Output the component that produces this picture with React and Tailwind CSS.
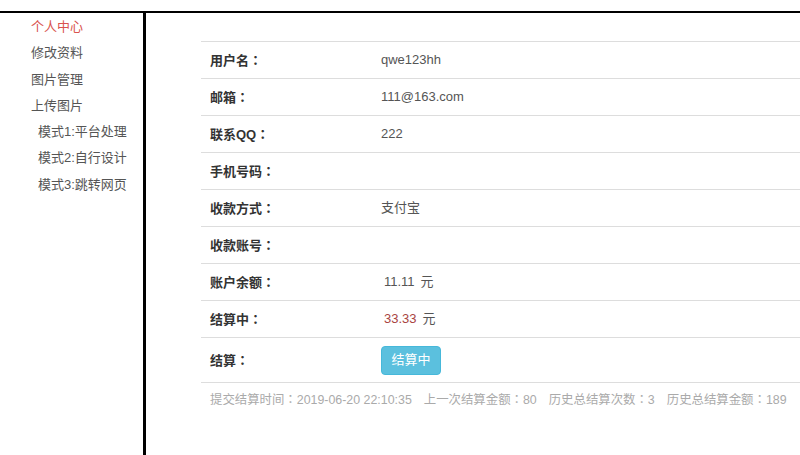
import React from "react";

const font = { fontFamily: '"Liberation Sans", "Noto Sans CJK SC", sans-serif' };

// 全角冒号居中显示
const C = () => <span style={{ fontFamily: '"Noto Sans CJK TC", sans-serif' }}>：</span>;

const menu = [
  { text: "个人中心", active: true },
  { text: "修改资料" },
  { text: "图片管理" },
  { text: "上传图片" },
  { text: "模式1:平台处理", sub: true },
  { text: "模式2:自行设计", sub: true },
  { text: "模式3:跳转网页", sub: true },
];

const rows = [
  { label: "用户名", value: "qwe123hh" },
  { label: "邮箱", value: "111@163.com" },
  { label: "联系QQ", value: "222" },
  { label: "手机号码", value: "" },
  { label: "收款方式", value: "支付宝" },
  { label: "收款账号", value: "" },
];

function Row({ label, children, tall }) {
  return (
    <div className={"flex items-center border-t border-[#ddd] " + (tall ? "h-[45px]" : "h-[37px]")}>
      <div className="w-[180px] pl-[9px] font-bold text-[#333]">
        {label}
        <C />
      </div>
      <div className="flex-1 text-[#555]">{children}</div>
    </div>
  );
}

export default function App() {
  return (
    <div className="h-[455px] w-[800px] overflow-hidden bg-white text-[13px]" style={font}>
      <div className="h-[11px]" />
      <div className="flex h-[444px] border-t-2 border-black">
        {/* 左侧菜单 */}
        <aside className="w-[146px] shrink-0 border-r-[3px] border-black pt-px pl-[31px]">
          {menu.map((m) => (
            <div
              key={m.text}
              className={
                "leading-[26.3px] " +
                (m.active ? "text-[#d9534f]" : "text-[#555]") +
                (m.sub ? " pl-[7px]" : "")
              }
            >
              {m.text}
            </div>
          ))}
        </aside>

        {/* 内容 */}
        <main className="min-w-0 flex-1 pl-[55px] pt-[28px]">
          {rows.map((r) => (
            <Row key={r.label} label={r.label}>{r.value}</Row>
          ))}
          <Row label="账户余额">
            <span className="pl-[3px]">11.11</span>
            <span className="pl-[6px]">元</span>
          </Row>
          <Row label="结算中">
            <span className="pl-[3px] text-[#a94442]">33.33</span>
            <span className="pl-[6px]">元</span>
          </Row>
          <Row label="结算" tall>
            <button className="h-[29px] w-[60px] rounded-[4px] border border-[#46b8da] bg-[#5bc0de] text-white">
              结算中
            </button>
          </Row>
          <div className="flex whitespace-nowrap border-t border-[#ddd] pt-[6px] pl-[9px] text-[12.4px] leading-[20px] text-[#aaa]">
            <span>提交结算时间<C />2019-06-20 22:10:35</span>
            <span className="ml-[12px]">上一次结算金额<C />80</span>
            <span className="ml-[12px]">历史总结算次数<C />3</span>
            <span className="ml-[12px]">历史总结算金额<C />189</span>
          </div>
        </main>
      </div>
    </div>
  );
}
